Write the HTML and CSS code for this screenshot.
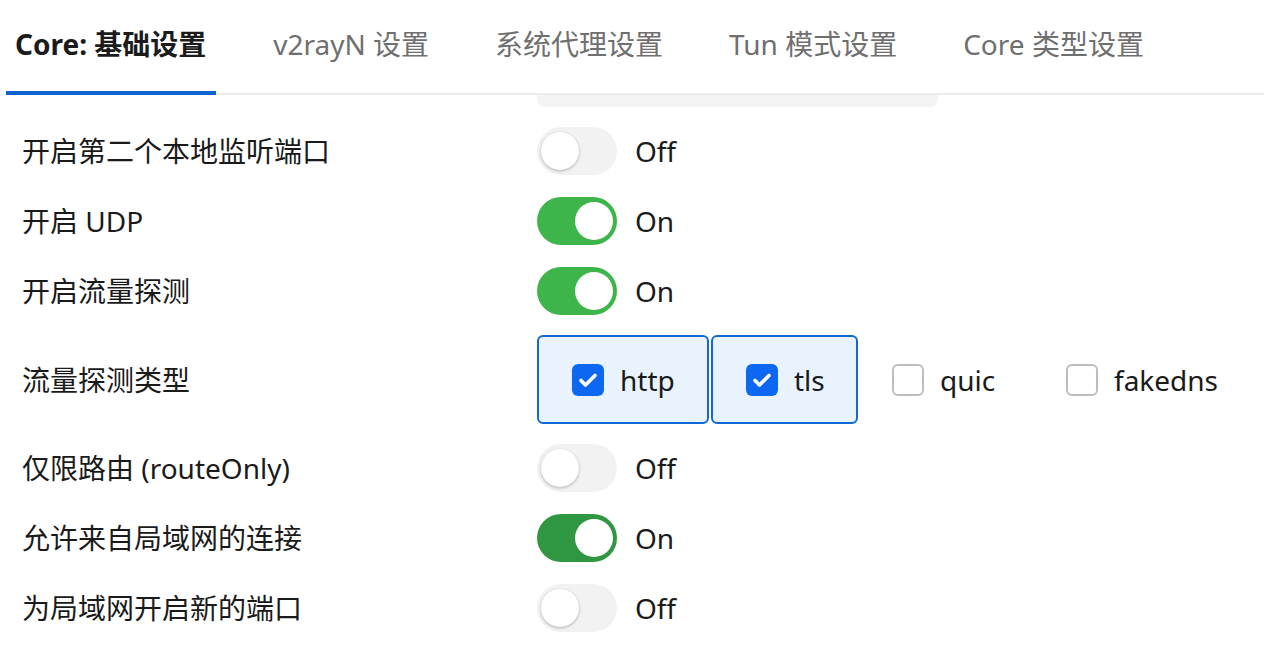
FILE: index.html
```html
<!DOCTYPE html>
<html lang="zh-CN">
<head>
<meta charset="utf-8">
<title>Settings</title>
<link rel="stylesheet" href="styles.css">
</head>
<body>
<div class="page">
  <nav class="tabs">
    <div class="tab active">Core: 基础设置</div>
    <div class="tab">v2rayN 设置</div>
    <div class="tab">系统代理设置</div>
    <div class="tab">Tun 模式设置</div>
    <div class="tab">Core 类型设置</div>
  </nav>
  <div class="content">
    <div class="row stub-row">
      <div class="label"></div>
      <div class="stub"></div>
    </div>
    <div class="row">
      <div class="label">开启第二个本地监听端口</div>
      <div class="control"><span class="switch"><span class="knob"></span></span><span class="state">Off</span></div>
    </div>
    <div class="row">
      <div class="label">开启 UDP</div>
      <div class="control"><span class="switch on"><span class="knob"></span></span><span class="state">On</span></div>
    </div>
    <div class="row">
      <div class="label">开启流量探测</div>
      <div class="control"><span class="switch on"><span class="knob"></span></span><span class="state">On</span></div>
    </div>
    <div class="row check-row">
      <div class="label">流量探测类型</div>
      <div class="control checks">
        <label class="opt sel opt-http"><span class="box checked"><svg viewBox="0 0 32 32" width="32" height="32"><path d="M9 16.5l4.5 4.5L23 11.5" fill="none" stroke="#fff" stroke-width="3.6" stroke-linecap="round" stroke-linejoin="round"/></svg></span><span class="opt-text">http</span></label>
        <label class="opt sel opt-tls"><span class="box checked"><svg viewBox="0 0 32 32" width="32" height="32"><path d="M9 16.5l4.5 4.5L23 11.5" fill="none" stroke="#fff" stroke-width="3.6" stroke-linecap="round" stroke-linejoin="round"/></svg></span><span class="opt-text">tls</span></label>
        <label class="opt opt-quic"><span class="box"></span><span class="opt-text">quic</span></label>
        <label class="opt opt-fake"><span class="box"></span><span class="opt-text">fakedns</span></label>
      </div>
    </div>
    <div class="row">
      <div class="label">仅限路由 (routeOnly)</div>
      <div class="control"><span class="switch"><span class="knob"></span></span><span class="state">Off</span></div>
    </div>
    <div class="row">
      <div class="label">允许来自局域网的连接</div>
      <div class="control"><span class="switch on dark"><span class="knob"></span></span><span class="state">On</span></div>
    </div>
    <div class="row">
      <div class="label">为局域网开启新的端口</div>
      <div class="control"><span class="switch"><span class="knob"></span></span><span class="state">Off</span></div>
    </div>
  </div>
</div>
</body>
</html>
```

FILE: styles.css
```css
html, body {
  margin: 0;
  padding: 0;
  background: #ffffff;
  overflow: hidden;
}
body {
  font-family: "Noto Sans", "Noto Sans CJK SC", sans-serif;
  color: #1a1a1a;
  width: 1264px;
  height: 652px;
}
.page {
  padding: 0 0 0 6px;
}
.tabs {
  display: flex;
  gap: 48px;
  height: 93px;
  border-bottom: 2px solid #ececec;
  align-items: stretch;
}
.tab {
  padding: 0 9px;
  font-size: 28px;
  line-height: 89px;
  color: #6f6f6f;
  white-space: nowrap;
  box-sizing: border-box;
  position: relative;
}
.tab.active {
  color: #1b1b1b;
  font-weight: 700;
  padding-right: 10px;
}
.tab.active::after {
  content: "";
  position: absolute;
  left: 0;
  right: 0;
  bottom: -2px;
  height: 4px;
  background: #0b63d1;
}
.content {
  display: flex;
  flex-direction: column;
  padding-left: 16px;
}
.row {
  display: flex;
  align-items: center;
  min-height: 48px;
  margin-top: 22px;
}
.stub-row {
  min-height: 0;
  margin-top: 0;
  align-items: flex-start;
}
.stub-row + .row {
  margin-top: 20px;
}
.stub {
  width: 401px;
  height: 12px;
  background: #f4f4f4;
  border-radius: 0 0 8px 8px;
}
.check-row {
  margin-top: 20px;
}
.check-row + .row {
  margin-top: 20px;
}
.label {
  width: 515px;
  flex: none;
  font-size: 28px;
  line-height: 34px;
  color: #1a1a1a;
  white-space: nowrap;
}
.control {
  display: flex;
  align-items: center;
}
.switch {
  width: 80px;
  height: 48px;
  border-radius: 24px;
  background: #f2f2f2;
  position: relative;
  flex: none;
}
.knob {
  position: absolute;
  top: 5px;
  left: 4px;
  width: 38px;
  height: 38px;
  border-radius: 50%;
  background: #ffffff;
  box-shadow: 0 1px 3px rgba(0,0,0,0.28);
}
.switch.on {
  background: #3db54a;
}
.switch.on.dark {
  background: #2f9641;
}
.switch.on .knob {
  left: 38px;
  box-shadow: none;
}
.state {
  margin-left: 18px;
  font-size: 28px;
  line-height: 34px;
  color: #1a1a1a;
}
.checks {
  gap: 0;
}
.opt {
  display: flex;
  align-items: center;
  height: 89px;
  box-sizing: border-box;
  font-size: 28px;
  color: #1a1a1a;
}
.opt.sel {
  border: 2px solid #1468d6;
  border-radius: 6px;
  background: #e8f3fd;
  padding: 0 33px;
}
.opt-http {
  width: 172px;
}
.opt-tls {
  width: 147px;
  margin-left: 2px;
}
.opt-quic {
  margin-left: 34px;
  width: 140px;
}
.opt-fake {
  margin-left: 34px;
}
.box {
  width: 32px;
  height: 32px;
  box-sizing: border-box;
  border-radius: 6px;
  border: 2px solid #bdbdbd;
  background: #ffffff;
  flex: none;
  display: flex;
}
.box.checked {
  border: none;
  background: #0d67f0;
}
.opt-text {
  margin-left: 16px;
  line-height: 34px;
}
```
